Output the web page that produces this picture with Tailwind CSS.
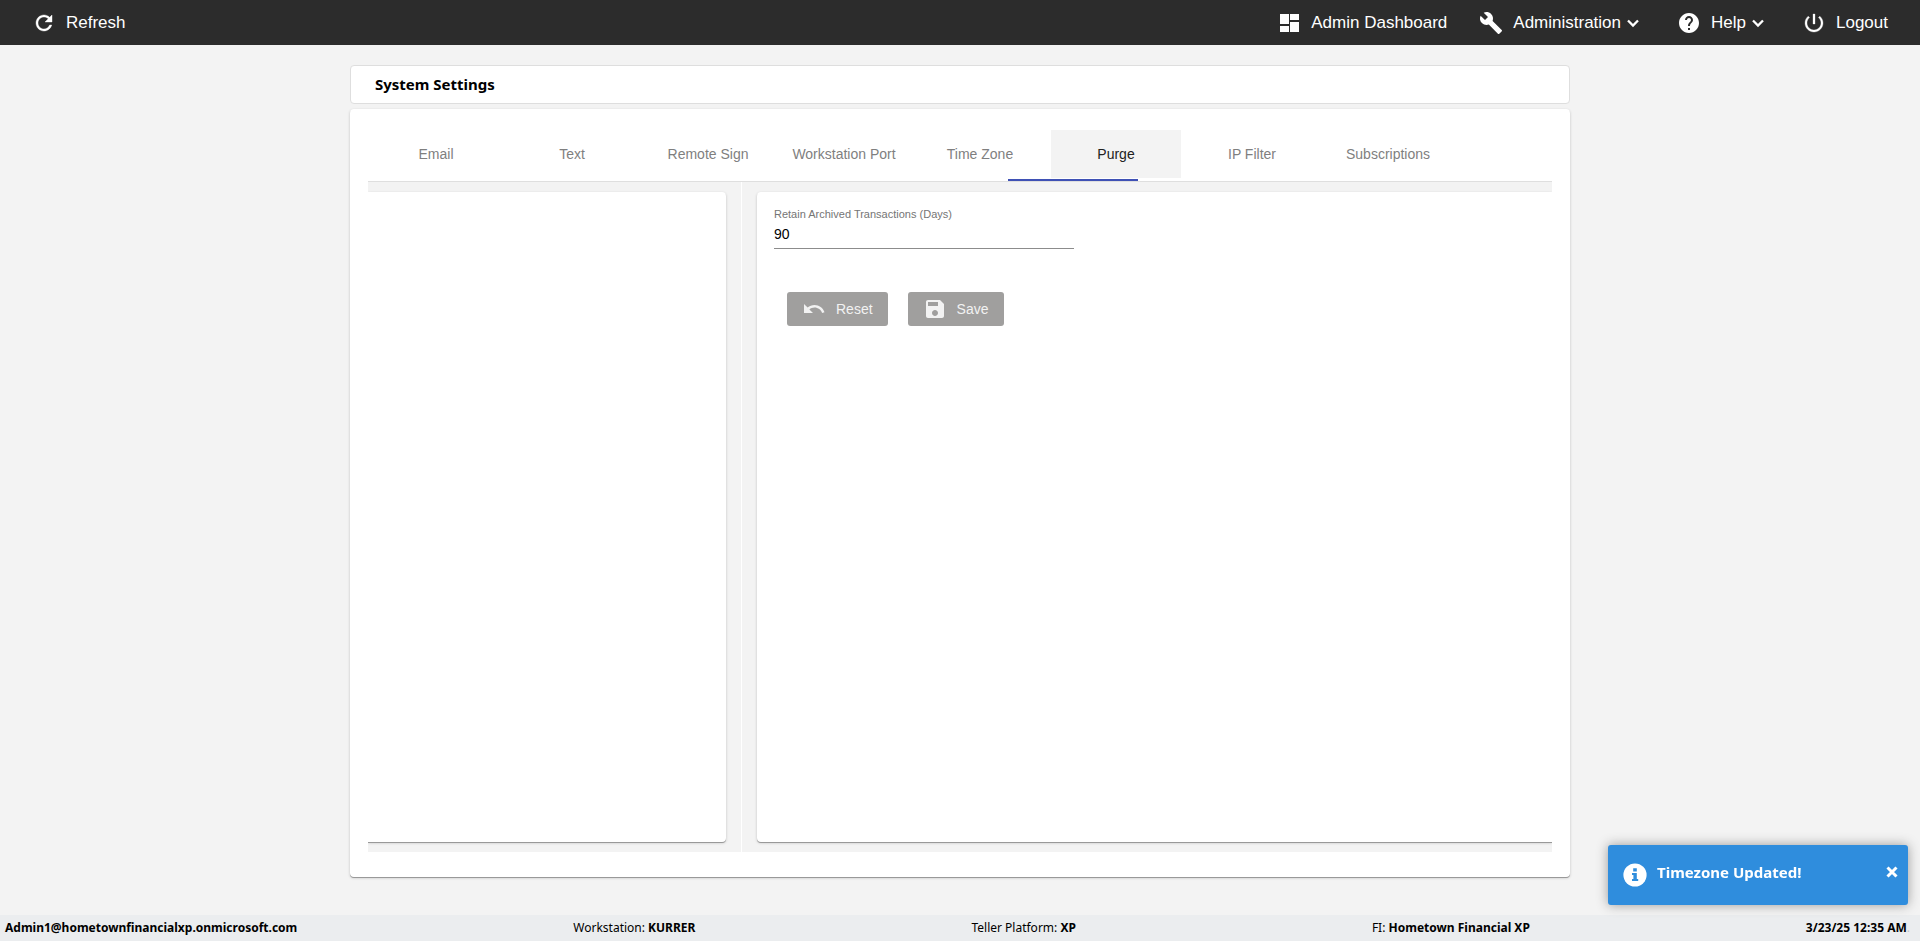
<!DOCTYPE html>
<html lang="en">
  <head>
    <meta charset="UTF-8" />
    <meta name="viewport" content="width=device-width, initial-scale=1.0" />
    <script src="https://cdn.jsdelivr.net/npm/@tailwindcss/browser@4"></script>
    <title>System Settings</title>
  </head>
  <body
    class="flex min-h-screen flex-col bg-[#f3f3f3] font-['Noto_Sans',sans-serif] text-black"
  >
    <!-- Navigation -->
    <nav
      class="flex h-[45px] items-center justify-between bg-[#2c2c2c] px-8 font-['Liberation_Sans',Arial,sans-serif] text-[17px] text-white"
    >
      <button type="button" class="flex items-center gap-2.5">
        <svg class="size-6" viewBox="0 0 24 24" fill="currentColor" stroke="currentColor" stroke-width="0.4" aria-hidden="true">
          <path
            d="M17.65 6.35C16.2 4.9 14.21 4 12 4c-4.42 0-7.99 3.58-7.99 8s3.57 8 7.99 8c3.73 0 6.84-2.55 7.73-6h-2.08c-.82 2.33-3.04 4-5.65 4-3.31 0-6-2.69-6-6s2.69-6 6-6c1.66 0 3.14.69 4.22 1.78L13 11h7V4l-2.35 2.35z"
          />
        </svg>
        Refresh
      </button>
      <div class="flex items-center">
        <a href="#" class="mr-8 flex items-center gap-2.5">
          <svg class="size-6" viewBox="0 0 24 24" fill="currentColor" aria-hidden="true">
            <path d="M3 3h9v10H3zM3 15h9v6H3zM13 11h9v10h-9zM13 3h9v6h-9z" />
          </svg>
          Admin Dashboard
        </a>
        <button type="button" class="mr-9 flex items-center gap-2.5">
          <svg class="size-6" viewBox="0 0 24 24" fill="currentColor" aria-hidden="true">
            <path
              d="M22.7 19l-9.1-9.1c.9-2.3.4-5-1.5-6.9-2-2-5-2.4-7.4-1.3L9 6 6 9 1.6 4.7C.4 7.1.9 10.1 2.9 12.1c1.9 1.9 4.6 2.4 6.9 1.5l9.1 9.1c.4.4 1 .4 1.4 0l2.3-2.3c.5-.4.5-1.1.1-1.4z"
            />
          </svg>
          <span class="flex items-center gap-1">
            Administration
            <svg class="size-4" viewBox="0 0 16 16" fill="none" stroke="currentColor" stroke-width="2.3" aria-hidden="true">
              <path d="M3 5.500l5 5 5-5" />
            </svg>
          </span>
        </button>
        <button type="button" class="mr-9 flex items-center gap-2.5">
          <svg class="size-6" viewBox="0 0 24 24" fill="currentColor" aria-hidden="true">
            <path
              d="M12 2C6.48 2 2 6.48 2 12s4.48 10 10 10 10-4.48 10-10S17.52 2 12 2zm1 17h-2v-2h2v2zm2.07-7.75l-.9.92C13.45 12.9 13 13.5 13 15h-2v-.5c0-1.1.45-2.1 1.17-2.83l1.24-1.26c.37-.36.59-.86.59-1.41 0-1.1-.9-2-2-2s-2 .9-2 2H8c0-2.21 1.79-4 4-4s4 1.79 4 4c0 .88-.36 1.68-.93 2.25z"
            />
          </svg>
          <span class="flex items-center gap-1">
            Help
            <svg class="size-4" viewBox="0 0 16 16" fill="none" stroke="currentColor" stroke-width="2.3" aria-hidden="true">
              <path d="M3 5.500l5 5 5-5" />
            </svg>
          </span>
        </button>
        <button type="button" class="flex items-center gap-2.5">
          <svg class="size-6" viewBox="0 0 24 24" fill="currentColor" stroke="currentColor" stroke-width="0.3" aria-hidden="true">
            <path
              d="M13 3h-2v10h2V3zm4.83 2.17l-1.42 1.42C17.99 7.86 19 9.81 19 12c0 3.87-3.13 7-7 7s-7-3.13-7-7c0-2.19 1.01-4.14 2.58-5.42L6.17 5.17C4.23 6.82 3 9.26 3 12c0 4.97 4.03 9 9 9s9-4.03 9-9c0-2.74-1.23-5.18-3.17-6.83z"
            />
          </svg>
          Logout
        </button>
      </div>
    </nav>

    <!-- Content -->
    <main class="mx-auto flex w-full max-w-[1220px] flex-1 flex-col gap-[5px] pt-5 pb-[38px]">
      <header class="rounded border border-[#dedede] bg-white px-6 py-2">
        <h1 class="text-[15px] leading-[21px] font-bold">System Settings</h1>
      </header>

      <section
        class="flex flex-1 flex-col rounded bg-white px-[18px] pt-[21px] pb-[25px] font-['Liberation_Sans',Arial,sans-serif] shadow-[0_1px_0_#999999,0_1px_3px_rgba(0,0,0,0.2)]"
      >
        <div class="relative border-b border-[#dfdfdf]">
          <div role="tablist" class="flex gap-1.5 px-[3px] pb-[3px] text-sm text-[#7f7f7f]">
            <button type="button" role="tab" class="h-12 w-[130px]">Email</button>
            <button type="button" role="tab" class="h-12 w-[130px]">Text</button>
            <button type="button" role="tab" class="h-12 w-[130px]">Remote Sign</button>
            <button type="button" role="tab" class="h-12 w-[130px]">Workstation Port</button>
            <button type="button" role="tab" class="h-12 w-[130px]">Time Zone</button>
            <button type="button" role="tab" aria-selected="true" class="h-12 w-[130px] bg-[#f3f3f3] text-[#212121]">
              Purge
            </button>
            <button type="button" role="tab" class="h-12 w-[130px]">IP Filter</button>
            <button type="button" role="tab" class="h-12 w-[130px]">Subscriptions</button>
          </div>
          <!-- active tab ink bar -->
          <div class="absolute bottom-0 left-[640px] h-0.5 w-[130px] bg-[#3f51b5]"></div>
        </div>

        <div class="flex flex-1 overflow-hidden bg-[#f3f3f3]">
          <div class="flex w-[374px] border-r border-white py-2.5 pr-[15px]">
            <div class="flex-1 rounded-r bg-white shadow-[0_1px_0_#999999,0_1px_3px_rgba(0,0,0,0.2)]"></div>
          </div>
          <div class="flex flex-1 py-2.5 pl-[15px]">
            <form class="flex-1 rounded-l bg-white px-[17px] pt-[15px] shadow-[0_1px_0_#999999,0_1px_3px_rgba(0,0,0,0.2)]">
              <label for="retainDays" class="block text-[11px] leading-[14px] text-[#757575]"
                >Retain Archived Transactions (Days)</label
              >
              <input
                type="text"
                id="retainDays"
                value="90"
                class="block h-7 w-[300px] border-b border-[#8c8c8c] pb-0.5 text-sm outline-none"
              />
              <div class="mt-[43px] ml-[13px] flex gap-5 text-sm text-[#f2f2f2]">
                <button type="button" class="flex h-[34px] items-center gap-2.5 rounded-[3px] bg-[#a09f9e] px-[15px]">
                  <svg class="size-6" viewBox="0 0 24 24" fill="currentColor" aria-hidden="true">
                    <path
                      d="M12.5 8c-2.65 0-5.05.99-6.9 2.6L2 7v9h9l-3.62-3.62c1.39-1.16 3.16-1.88 5.12-1.88 3.54 0 6.55 2.31 7.6 5.5l2.37-.78C21.08 11.03 17.15 8 12.5 8z"
                    />
                  </svg>
                  Reset
                </button>
                <button type="button" class="flex h-[34px] items-center gap-2.5 rounded-[3px] bg-[#a09f9e] px-[15px]">
                  <svg class="size-6" viewBox="0 0 24 24" fill="currentColor" aria-hidden="true">
                    <path
                      d="M17 3H5c-1.11 0-2 .9-2 2v14c0 1.1.89 2 2 2h14c1.1 0 2-.9 2-2V7l-4-4zm-5 16c-1.66 0-3-1.34-3-3s1.34-3 3-3 3 1.34 3 3-1.34 3-3 3zm3-10H5V5h10v4z"
                    />
                  </svg>
                  Save
                </button>
              </div>
            </form>
          </div>
        </div>
      </section>
    </main>

    <!-- Status bar -->
    <footer
      class="flex h-[26px] items-center justify-between bg-[#ebedef] pr-2.5 pl-[5px] text-xs"
    >
      <b>Admin1@hometownfinancialxp.onmicrosoft.com</b>
      <span>Workstation: <b>KURRER</b></span>
      <span>Teller Platform: <b>XP</b></span>
      <span class="pl-5">FI: <b>Hometown Financial XP</b></span>
      <span><b>3/23/25 12:35 AM</b><span class="text-[#c4c6c8]">.</span></span>
    </footer>

    <!-- Toast -->
    <div
      role="alert"
      class="fixed right-3 bottom-9 flex h-[60px] w-[300px] items-center rounded-[3px] bg-[#2f8ddd] pr-2.5 pl-[15px] text-white shadow-[0_0_12px_#999999]"
    >
      <svg class="size-6" viewBox="0 0 24 24" aria-hidden="true">
        <circle cx="12" cy="12" r="11.6" fill="currentColor" />
        <path fill="#2f8ddd" d="M10.2 5.2h3.6v3.2h-3.6zM9 10h4.8v6h1.4v2H9v-2h1.4v-4H9z" />
      </svg>
      <span class="ml-2.5 flex-1 pb-1.5 text-[15px] font-bold">Timezone Updated!</span>
      <button type="button" aria-label="Close" class="pb-1.5">
        <svg class="size-3" viewBox="0 0 12 12" fill="none" stroke="currentColor" stroke-width="3" aria-hidden="true">
          <path d="M1.5 1.5l9 9M10.5 1.5l-9 9" />
        </svg>
      </button>
    </div>
  </body>
</html>
